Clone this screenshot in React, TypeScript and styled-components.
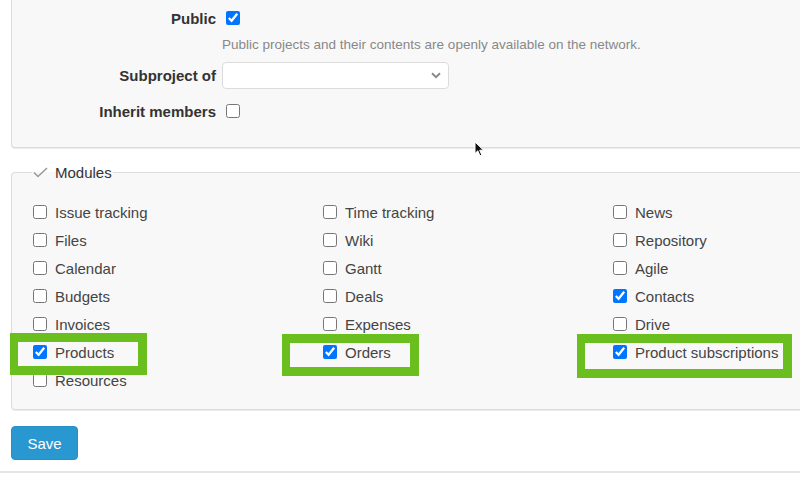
import React from "react";
import styled, { createGlobalStyle } from "styled-components";

const Global = createGlobalStyle`
  html, body { margin: 0; padding: 0; background: #fff; overflow: hidden; }
  body { font-family: "Liberation Sans", Arial, sans-serif; color: #333; }
`;

const Page = styled.div`
  position: relative;
  width: 800px;
  height: 482px;
  overflow: hidden;
`;

const Content = styled.div`
  width: 900px;
  padding-left: 11px;
  display: flex;
  flex-direction: column;
`;

const TopBox = styled.div`
  background: #f8f8f8;
  border: 1px solid #dcdcdc;
  border-top: none;
  border-radius: 0 0 4px 4px;
  box-shadow: 0 1px 0 #ececec;
  padding: 4px 0 19px 0;
  display: grid;
  grid-template-columns: 204px 1fr;
  column-gap: 6px;
  grid-template-rows: 28px 24px 38px 34px;
  align-items: center;
`;

const Label = styled.label`
  text-align: right;
  font-weight: bold;
  font-size: 15px;
  color: #333;
`;

const Field = styled.div`
  display: flex;
  align-items: center;
  grid-column: 2;
`;

const Check = styled.input.attrs({ type: "checkbox" })`
  width: 14px;
  height: 14px;
  margin: 0 0 0 4px;
`;

const Help = styled.span`
  font-size: 13.5px;
  color: #888;
`;

const SelectWrap = styled.div`
  position: relative;
  width: 227px;
  height: 27px;
`;

const Select = styled.select`
  appearance: none;
  width: 100%;
  height: 100%;
  box-sizing: border-box;
  border: 1px solid #dcdcdc;
  border-radius: 4px;
  background: #fff;
  font-family: inherit;
  font-size: 14px;
`;

const Chevron = styled.svg`
  position: absolute;
  right: 8px;
  top: 10px;
  pointer-events: none;
`;

const Fieldset = styled.fieldset`
  margin: 16px 0 0 0;
  background: #f8f8f8;
  border: 1px solid #dcdcdc;
  border-radius: 4px;
  box-shadow: 0 1px 0 #ececec;
  padding: 0 0 15px 17px;
  min-width: 0;
`;

const Legend = styled.legend`
  margin-left: 3px;
  padding: 0 1px;
  display: flex;
  align-items: center;
  gap: 7px;
  font-size: 15px;
  color: #333;
  line-height: 17px;
`;

const ModuleGrid = styled.div`
  display: grid;
  grid-template-columns: repeat(3, 290px);
  grid-auto-rows: 28px;
  padding-top: 17px;
`;

const ModuleItem = styled.label`
  display: flex;
  align-items: center;
  font-size: 15px;
  color: #444;
`;

const ModuleCheck = styled(Check)`
  margin-right: 8px;
`;

const Actions = styled.div`
  padding: 16px 0 11px 0;
`;

const SaveButton = styled.button`
  width: 67px;
  height: 34px;
  background: #2a98d0;
  border: 1px solid #2690c6;
  border-radius: 4px;
  color: #fff;
  font-family: inherit;
  font-size: 15px;
`;

const BottomRule = styled.div`
  height: 2px;
  background: #e4e4e4;
  margin-left: -11px;
`;

const Highlight = styled.div<{ $x: number; $y: number; $w: number; $h: number }>`
  position: absolute;
  left: ${(p) => p.$x}px;
  top: ${(p) => p.$y}px;
  width: ${(p) => p.$w}px;
  height: ${(p) => p.$h}px;
  box-sizing: border-box;
  border: 9px solid #6abf1f;
  border-left-width: 8px;
  pointer-events: none;
`;

const Cursor = styled.svg`
  position: absolute;
  left: 474px;
  top: 141px;
`;

const modules: [string, boolean][] = [
  ["Issue tracking", false], ["Time tracking", false], ["News", false],
  ["Files", false], ["Wiki", false], ["Repository", false],
  ["Calendar", false], ["Gantt", false], ["Agile", false],
  ["Budgets", false], ["Deals", false], ["Contacts", true],
  ["Invoices", false], ["Expenses", false], ["Drive", false],
  ["Products", true], ["Orders", true], ["Product subscriptions", true],
  ["Resources", false],
];

export default function App() {
  return (
    <Page>
      <Global />
      <Content>
        <TopBox>
          <Label>Public</Label>
          <Field>
            <Check defaultChecked />
          </Field>
          <Field>
            <Help>Public projects and their contents are openly available on the network.</Help>
          </Field>
          <Label>Subproject of</Label>
          <Field>
            <SelectWrap>
              <Select defaultValue="">
                <option value=""></option>
              </Select>
              <Chevron width="10" height="7" viewBox="0 0 10 7">
                <path d="M1 1.2 L5 5.2 L9 1.2" fill="none" stroke="#8a8a8a" strokeWidth="2" />
              </Chevron>
            </SelectWrap>
          </Field>
          <Label>Inherit members</Label>
          <Field>
            <Check />
          </Field>
        </TopBox>

        <Fieldset>
          <Legend>
            <svg width="15" height="11" viewBox="0 0 15 11">
              <path d="M1 5.5 L5 9.5 L14 1" fill="none" stroke="#9a9a9a" strokeWidth="1.6" />
            </svg>
            Modules
          </Legend>
          <ModuleGrid>
            {modules.map(([name, checked]) => (
              <ModuleItem key={name}>
                <ModuleCheck defaultChecked={checked} />
                {name}
              </ModuleItem>
            ))}
          </ModuleGrid>
        </Fieldset>

        <Actions>
          <SaveButton>Save</SaveButton>
        </Actions>
        <BottomRule />
      </Content>

      <Highlight $x={10} $y={333} $w={137} $h={42} />
      <Highlight $x={282} $y={334} $w={137} $h={42} />
      <Highlight $x={577} $y={334} $w={215} $h={44} />

      <Cursor width="11" height="16" viewBox="0 0 11 16">
        <path d="M1 1 L1 12.5 L3.8 9.8 L6 14.8 L7.8 14 L5.7 9.2 L9.5 9.2 Z" fill="#111" stroke="#fff" strokeWidth="1" />
      </Cursor>
    </Page>
  );
}
